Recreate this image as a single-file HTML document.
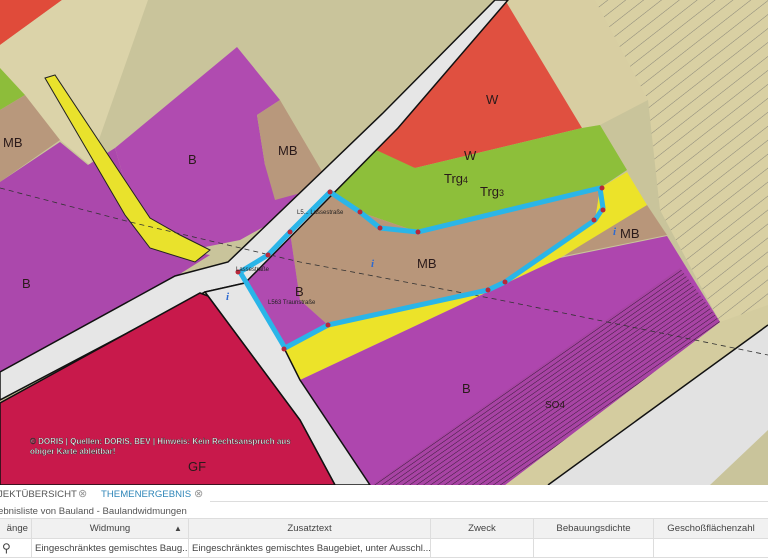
<!DOCTYPE html>
<html><head><meta charset="utf-8"><style>
html,body{margin:0;padding:0;width:768px;height:560px;overflow:hidden;background:#fff;font-family:"Liberation Sans",sans-serif}
#map{position:absolute;left:0;top:0}
.p{position:absolute;font-size:9.6px;color:#555;white-space:nowrap}
.c{position:absolute;height:19px;line-height:19px;font-size:9.6px;color:#444;white-space:nowrap;overflow:hidden;border-right:1px solid #ddd;box-sizing:border-box;padding:0 3px}
.hd{background:#f1f1f1;text-align:center;top:519px}
.dr{top:539px}
</style></head><body>
<svg id="map" width="768" height="485" viewBox="0 0 768 485">
<defs>
<pattern id="hs" width="11" height="11" patternUnits="userSpaceOnUse" patternTransform="rotate(-38)"><rect width="11" height="11" fill="#d9d0a3"/><line x1="0" y1="0" x2="11" y2="0" stroke="#666" stroke-width="0.7"/></pattern>
<pattern id="hp" width="4" height="4" patternUnits="userSpaceOnUse" patternTransform="rotate(-35)"><rect width="4" height="4" fill="#a844a4"/><line x1="0" y1="0" x2="4" y2="0" stroke="#3a1a3a" stroke-width="1"/></pattern>
</defs>
<rect width="768" height="485" fill="#c9c49b"/>
<polygon points="590,0 768,0 768,310 720,322 660,210 648,100" fill="url(#hs)"/>
<polygon points="505,0 595,0 648,100 600,125 582,128" fill="#d8cea2"/>
<polygon points="505,485 720,322 768,305 768,325 548,485" fill="#d4cc9f"/>
<polygon points="0,0 62,0 0,45" fill="#e04b3a"/>
<polygon points="62,0 148,0 90,165 60,140 0,70 0,45" fill="#dbd3a9"/>
<polygon points="0,68 25,95 0,110" fill="#8dbd3a"/>
<polygon points="0,110 25,95 60,140 0,182" fill="#b8987c"/>
<polygon points="0,182 60,142 88,165 115,148 130,200 150,245 210,255 175,277 0,373" fill="#ab48ac"/>
<polygon points="115,148 237,47 280,100 257,115 265,165 330,190 240,240 200,248 150,245 130,200" fill="#b04bb0"/>
<polygon points="257,115 280,100 330,185 275,200 265,165" fill="#b8987c"/>
<polygon points="45,78 55,75 150,218 180,235 210,250 195,262 150,248 125,215" fill="#e9e22c" stroke="#222" stroke-width="1"/>
<polygon points="502,0 505,0 582,128 415,168 376,155 372,135" fill="#e05040"/>
<polygon points="340,172 376,150 415,168 582,128 600,125 627,170 600,188 418,232 360,212 330,192" fill="#8dbf3a"/>
<polygon points="290,232 330,192 360,212 418,232 600,188 603,208 595,220 505,282 488,290 328,325 300,300" fill="#b8967a"/>
<polygon points="647,205 667,235 564,256 600,232" fill="#b8967a"/>
<polygon points="240,270 290,232 300,300 328,325 285,348" fill="#b04bb0"/>
<polygon points="600,188 627,172 647,205 560,258 300,380 285,350 328,325 488,290 505,282 595,220" fill="#ece329"/>
<polygon points="300,380 560,258 667,236 720,322 505,485 370,485" fill="#ae46ae"/>
<polygon points="372,485 680,268 720,322 505,485" fill="url(#hp)"/>
<polygon points="548,485 768,325 768,430 710,485" fill="#e2e2e2"/>
<line x1="548" y1="485" x2="768" y2="325" stroke="#111" stroke-width="1.5"/>
<!-- roads -->
<polygon points="0,372 175,276 228,262 383,113 495,0 508,0 398,128 245,283 205,292 0,400" fill="#e6e6e6" stroke="#111" stroke-width="1.5"/>
<polygon points="205,292 245,283 285,350 300,380 370,485 335,485 300,420" fill="#e6e6e6" stroke="#111" stroke-width="1.5"/>
<polygon points="0,403 200,293 208,296 300,420 335,485 0,485" fill="#c8194b" stroke="#111" stroke-width="1.5"/>
<polyline points="0,188 130,222 300,262 500,300 768,355" fill="none" stroke="#333" stroke-width="0.8" stroke-dasharray="5,4"/>
<polyline points="240,272 268,255 290,232 330,192 360,212 380,228 418,232 600,188 603,208 595,220 505,282 488,290 328,325 285,348 240,272" fill="none" stroke="#2ab5e8" stroke-width="5" stroke-linejoin="round"/>
<g fill="#b8283a"><circle cx="268" cy="255" r="2.5"/><circle cx="290" cy="232" r="2.5"/><circle cx="330" cy="192" r="2.5"/><circle cx="360" cy="212" r="2.5"/><circle cx="380" cy="228" r="2.5"/><circle cx="418" cy="232" r="2.5"/><circle cx="602" cy="188" r="2.5"/><circle cx="603" cy="210" r="2.5"/><circle cx="594" cy="220" r="2.5"/><circle cx="505" cy="282" r="2.5"/><circle cx="488" cy="290" r="2.5"/><circle cx="328" cy="325" r="2.5"/><circle cx="284" cy="349" r="2.5"/><circle cx="238" cy="272" r="2.5"/></g>
<g font-family="Liberation Sans,sans-serif" font-size="13" fill="#2a1a1a">
<text x="3" y="147">MB</text><text x="188" y="164">B</text><text x="278" y="155">MB</text>
<text x="486" y="104">W</text><text x="464" y="160">W</text>
<text x="444" y="183">Trg<tspan font-size="9">4</tspan></text><text x="480" y="196">Trg<tspan font-size="9">3</tspan></text>
<text x="417" y="268">MB</text><text x="620" y="238">MB</text><text x="295" y="296">B</text>
<text x="22" y="288">B</text><text x="462" y="393">B</text><text x="545" y="408" font-size="10">SO4</text>
<text x="188" y="471">GF</text>
</g>
<g font-family="Liberation Sans,sans-serif" font-size="6" fill="#222"><text x="297" y="214">L5... Lassestraße</text><text x="236" y="271">Lassestraße</text><text x="268" y="304">L563 Traunstraße</text></g>
<g font-family="Liberation Sans,sans-serif" font-size="8" font-weight="bold" fill="#fff" stroke="#222" stroke-width="0.35"><text x="30" y="444">© DORIS | Quellen: DORIS, BEV | Hinweis: Kein Rechtsanspruch aus</text><text x="30" y="454">obiger Karte ableitbar!</text></g>
<g font-family="Liberation Serif,serif" font-size="11" font-weight="bold" font-style="italic" fill="#2d6ad0"><text x="371" y="267">i</text><text x="613" y="235">i</text><text x="226" y="300">i</text></g>
</svg>
<div class="p" style="left:-2px;top:489px">JEKTÜBERSICHT</div>
<div class="p" style="left:78px;top:487px;color:#999;font-size:11px">⊗</div>
<div class="p" style="left:101px;top:489px;color:#2f86b8">THEMENERGEBNIS</div>
<div class="p" style="left:194px;top:487px;color:#999;font-size:11px">⊗</div>
<div style="position:absolute;left:210px;top:501px;width:558px;height:1px;background:#ddd"></div>
<div class="p" style="left:-2px;top:506px">ebnisliste von Bauland - Baulandwidmungen</div>
<div style="position:absolute;left:0;top:518px;width:768px;height:1px;background:#ddd"></div>
<div style="position:absolute;left:0;top:538px;width:768px;height:1px;background:#ddd"></div>
<div style="position:absolute;left:0;top:557px;width:768px;height:1px;background:#ddd"></div>
<div class="c hd" style="left:0;width:32px;text-align:right">änge</div>
<div class="c hd" style="left:32px;width:157px">Widmung<span style="position:absolute;left:142px;font-size:8px">▲</span></div>
<div class="c hd" style="left:189px;width:242px">Zusatztext</div>
<div class="c hd" style="left:431px;width:103px">Zweck</div>
<div class="c hd" style="left:534px;width:120px">Bebauungsdichte</div>
<div class="c hd" style="left:654px;width:114px;border-right:0">Geschoßflächenzahl</div>
<div class="c dr" style="left:0;width:32px;font-size:12px;padding:0 2px">⚲</div>
<div class="c dr" style="left:32px;width:157px">Eingeschränktes gemischtes Baug...</div>
<div class="c dr" style="left:189px;width:242px">Eingeschränktes gemischtes Baugebiet, unter Ausschl...</div>
<div class="c dr" style="left:431px;width:103px"></div>
<div class="c dr" style="left:534px;width:120px"></div>
</body></html>
